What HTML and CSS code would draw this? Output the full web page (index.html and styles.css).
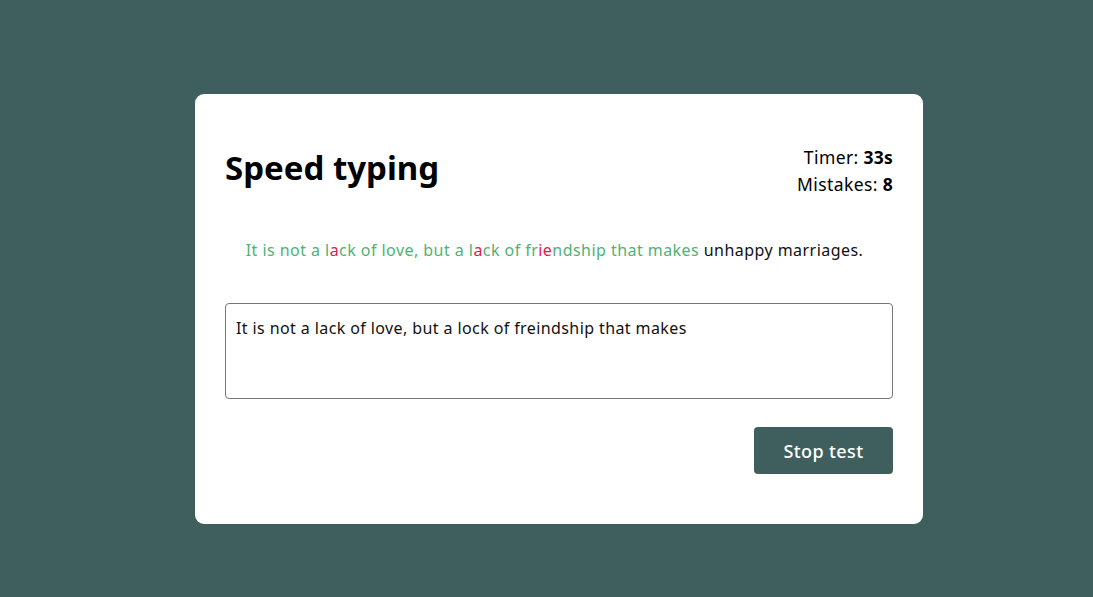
FILE: index.html
```html
<!DOCTYPE html>
<html>
<head>
<meta charset="utf-8">
<link rel="stylesheet" href="styles.css">
</head>
<body>
<main class="card">
  <header class="head">
    <h1 class="title">Speed typing</h1>
    <div class="stats">
      <div>Timer: <b>33s</b></div>
      <div>Mistakes: <b>8</b></div>
    </div>
  </header>
  <p class="quote"><span class="ok">It is not a l</span><span class="bad">a</span><span class="ok">ck of love, but a l</span><span class="bad">a</span><span class="ok">ck of fr</span><span class="bad">ie</span><span class="ok">ndship that makes</span> unhappy marriages.</p>
  <div class="input">It is not a lack of love, but a lock of freindship that makes</div>
  <div class="actions">
    <button class="btn">Stop test</button>
  </div>
</main>
</body>
</html>
```
FILE: styles.css
```css
html, body { margin: 0; padding: 0; }
body {
  background: #3e5f5d;
  width: 1093px;
  height: 597px;
  overflow: hidden;
  font-family: "Noto Sans", "Open Sans", sans-serif;
  color: #111;
}
.card {
  box-sizing: border-box;
  width: 728px;
  height: 430px;
  margin: 94px 0 0 195px;
  background: #fff;
  border-radius: 9px;
  padding: 50px 30px 50px 30px;
  display: flex;
  flex-direction: column;
}
.head {
  display: flex;
  justify-content: space-between;
  align-items: flex-start;
}
.title {
  margin: 4px 0 0 0;
  font-size: 33px;
  font-weight: 700;
  line-height: 40px;
  color: #000;
}
.stats {
  text-align: right;
  font-size: 17.5px;
  letter-spacing: 0.4px;
  line-height: 27px;
  color: #000;
}
.stats b { font-weight: 700; letter-spacing: 0.2px; }
.quote {
  margin: 40px 0 0 0;
  padding-right: 9px;
  text-align: center;
  font-size: 16px;
  letter-spacing: 0.45px;
  line-height: 24px;
  color: #111;
}
.ok { color: #4fb274; }
.bad { color: #e8174f; }
.input {
  box-sizing: border-box;
  margin-top: 41px;
  height: 97px;
  border: 1px solid #777;
  border-radius: 4px;
  padding: 13px 10px 12px;
  font-size: 16px;
  letter-spacing: 0.4px;
  line-height: 22px;
  color: #111;
}
.actions {
  display: flex;
  justify-content: flex-end;
  margin-top: 28px;
}
.btn {
  width: 139px;
  height: 47px;
  border: none;
  border-radius: 4px;
  background: #3e5f5d;
  color: #fff;
  font-family: inherit;
  font-size: 18px;
  font-weight: 500;
  letter-spacing: 0.4px;
}
```
